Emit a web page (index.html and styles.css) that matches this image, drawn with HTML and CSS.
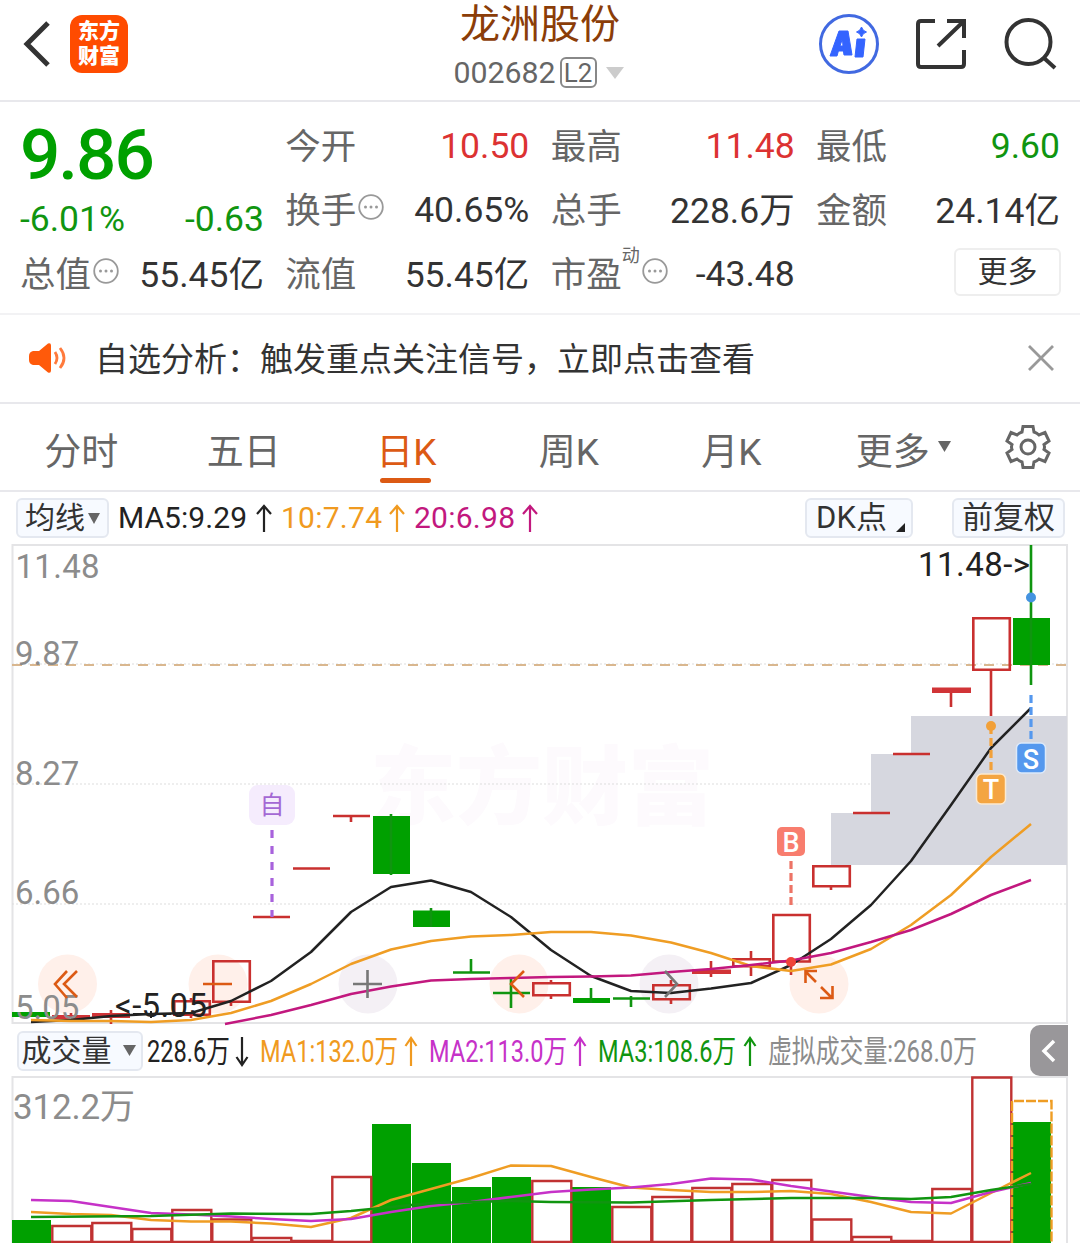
FILE: index.html
```html
<!DOCTYPE html>
<html lang="zh-CN">
<head>
<meta charset="utf-8">
<title>龙洲股份 002682</title>
<link rel="stylesheet" href="styles.css">
</head>
<body>
<header class="topbar">
  <div class="topbar-left">
    <svg class="back" width="30" height="50" viewBox="0 0 30 50"><path d="M27 4 6 25 27 46" fill="none" stroke="#333" stroke-width="5"/></svg>
    <div class="logo"><span>东方</span><span>财富</span></div>
  </div>
  <div class="stock">
    <h1>龙洲股份</h1>
    <div class="code"><span>002682</span><span class="level">L2</span><svg width="18" height="12"><path d="M0 0h18L9 12z" fill="#ccc"/></svg></div>
  </div>
  <div class="actions">
    <svg width="62" height="62" viewBox="0 0 62 62"><circle cx="31" cy="31" r="28.5" fill="#fff" stroke="#4169e1" stroke-width="3"/><path d="M12 43 21 18h9l4 24h-8l-.6-4h-5l-1.4 5zM22 33h3l-.6-7zM39 26h8l-2 18h-8zM43.500 14q1.200 4 5 5-4 1.200-5 5-1.200-4-5-5 4-1.200 5-5z" fill="#3464ff" stroke="#3464ff" stroke-width="1" fill-rule="evenodd" stroke-linejoin="round"/></svg>
    <svg width="54" height="54" viewBox="0 0 54 54"><path d="M21 4H7Q4 4 4 7v40q0 3 3 3h40q3 0 3-3V33M33 4h17v17M50 4 24 29" fill="none" stroke="#333" stroke-width="4"/></svg>
    <svg width="54" height="54" viewBox="0 0 54 54"><circle cx="25.500" cy="25" r="22" fill="none" stroke="#333" stroke-width="4"/><path d="m41 41 11 10" stroke="#333" stroke-width="4"/></svg>
  </div>
</header>

<section class="quote">
  <div class="price-col">
    <div class="price">9.86</div>
    <div class="row change"><span>-6.01%</span><span>-0.63</span></div>
    <div class="row"><span class="label">总值<svg class="tip" width="26" height="26"><use href="#tip"/></svg></span><span class="cn">55.45亿</span></div>
  </div>
  <div class="col">
    <div class="row"><span class="label">今开</span><span class="up">10.50</span></div>
    <div class="row"><span class="label">换手<svg class="tip" width="26" height="26"><use href="#tip"/></svg></span><span>40.65%</span></div>
    <div class="row"><span class="label">流值</span><span class="cn">55.45亿</span></div>
  </div>
  <div class="col">
    <div class="row"><span class="label">最高</span><span class="up">11.48</span></div>
    <div class="row"><span class="label">总手</span><span class="cn">228.6万</span></div>
    <div class="row"><span class="label">市盈<span class="dyn">动</span><svg class="tip" width="26" height="26"><use href="#tip"/></svg></span><span>-43.48</span></div>
  </div>
  <div class="col">
    <div class="row"><span class="label">最低</span><span class="down">9.60</span></div>
    <div class="row"><span class="label">金额</span><span class="cn">24.14亿</span></div>
    <div class="row end"><button class="more">更多</button></div>
  </div>
</section>

<svg width="0" height="0" class="defs"><symbol id="tip" viewBox="0 0 26 26"><circle cx="13" cy="13" r="11.800" fill="none" stroke="#999" stroke-width="1.800"/><g fill="#999"><circle cx="7.500" cy="13" r="1.500"/><circle cx="13" cy="13" r="1.500"/><circle cx="18.500" cy="13" r="1.500"/></g></symbol></svg>

<section class="notice">
  <svg width="38" height="30" viewBox="0 0 38 30"><path d="M4 8h6L19 .5q3-1 3 2v25q0 3-3 2L10 22H4q-4-1-4-5v-4q0-4 4-5z" fill="#ff5a0a"/><path d="M26 9q4 6 0 12M31 5q8 10 0 20" fill="none" stroke="#ff7a3c" stroke-width="2.800"/></svg>
  <span class="notice-text">自选分析：触发重点关注信号，立即点击查看</span>
  <svg width="26" height="26" viewBox="0 0 26 26"><path d="m1 1 24 24M25 1 1 25" stroke="#999" stroke-width="2.800"/></svg>
</section>

<nav class="tabs">
  <span>分时</span><span>五日</span><span class="active">日K</span><span>周K</span><span>月K</span>
  <span class="drop">更多<svg width="13" height="11"><path d="M0 0h13L6.500 11z" fill="#666"/></svg></span>
  <svg class="gear" width="46" height="46" viewBox="-23 -23 46 46"><path d="M-5-20.500H5L6-15Q9-14 11-12L17-14.500 21-6 16-2.500Q17 0 16 2.500L21 6 17 14.500 11 12Q9 14 6 15L5 20.500H-5L-6 15Q-9 14-11 12L-17 14.500-21 6-16 2.500Q-17 0-16-2.500L-21-6-17-14.500-11-12Q-9-14-6-15Z" fill="none" stroke="#666" stroke-width="3"/><circle r="7" fill="none" stroke="#666" stroke-width="3"/></svg>
</nav>

<div class="legend ma">
  <button class="chip">均线<svg width="12" height="11"><path d="M0 0h12L6 11z" fill="#666"/></svg></button>
  <svg class="series" width="440" height="50" viewBox="110 494 440 50">
    <g font-size="30">
      <text x="118" y="529" fill="#222" textLength="129">MA5:9.29</text>
      <text x="281" y="529" fill="#f09a20" textLength="101">10:7.74</text>
      <text x="414" y="529" fill="#c2187e" textLength="101">20:6.98</text>
    </g>
    <g fill="none" stroke-width="2.200">
      <path d="M264 533V507M257 515l7-8 7 8" stroke="#222"/>
      <path d="M397 533V507M390 515l7-8 7 8" stroke="#f09a20"/>
      <path d="M530 533V507M523 515l7-8 7 8" stroke="#c2187e"/>
    </g>
  </svg>
  <button class="chip dk">DK点<svg width="9" height="9"><path d="M9 0v9H0z" fill="#222"/></svg></button>
  <button class="chip fq">前复权</button>
</div>

<svg class="chart" width="1080" height="481" viewBox="0 544 1080 481">
  <text class="wm" x="370" y="818" textLength="344">东方财富</text>
  <path d="M12.500 1023V545H1067V1023Z" fill="none" stroke="#e4e4e6" stroke-width="2"/>
  <path d="M12 664H1067M12 784H1067M12 904H1067" stroke="#ddd" stroke-dasharray="2 2"/>
  <path d="M831 865V813h40v-59h40v-38h156v149z" fill="#d6d7df"/>
  <path d="M12 665H1067" stroke="#d9b78f" stroke-width="2" stroke-dasharray="10 8"/>
  <g fill="#fff0ea"><circle cx="67.500" cy="984" r="29.500"/><circle cx="218" cy="984" r="29.500"/><circle cx="519" cy="984" r="29.500"/><circle cx="819" cy="984" r="29.500"/></g>
  <g fill="#f4f0f5"><circle cx="368" cy="984" r="29.500"/><circle cx="669" cy="984" r="29.500"/></g>
  <g fill="none" stroke="#c9302f" stroke-width="2.600">
    <path d="M174.300 1001.300h35.500v13.400h-35.500zM213.300 961.300h36.500v40.500h-36.500zM533.300 983.300h36.500v12h-36.500zM653.300 985.300h36.500v14h-36.500zM733.300 959.300h36.500v7h-36.500zM773.300 915h36.500v46.500h-36.500zM813.300 866.300h36.500v20h-36.500zM973.300 618.300h36.500v51.500h-36.500z"/>
    <path d="M253 917h37M293 868.500h37M333 816h37M853 813h37M893 754h37M351 816v6M71 1013v6M111 1010v14M191 998v4M191 1015v3M231 1002v4M551 980v3M551 995v4M671 980v5M671 999v5M711 961v16M751 951v8M751 966v10M791 961v14M831 887v3M951 692v15M991 670v46"/>
  </g>
  <path d="M52 1015h38v4H52zM92 1013h38v5H92zM692 969.500h39v4.500H692zM932 687.500h39v5.500H932z" fill="#d13437"/>
  <path d="M133 1014h38M151 1011v7" stroke="#222" stroke-width="2"/>
  <g fill="#00a000"><path d="M12 1012h38v5H12zM373 816h37v58h-37zM413 910.500h37v16.500h-37zM573 998h37v5h-37zM1013 618h37v47h-37z"/></g>
  <path d="M391 814v61M431 908v19M453 972.500h37M471 959v13M493 993h37M511 978v30M591 988v15M613 998.500h37M631 996v11M1031 545v140" stroke="#109510" stroke-width="2.600"/>
  <g class="axis"><text x="15.500" y="578" textLength="84">11.48</text><text x="15" y="665">9.87</text><text x="15" y="785">8.27</text><text x="15" y="904">6.66</text><text x="15" y="1019">5.05</text></g>
  <g fill="none" stroke-width="2.500" stroke-linejoin="round">
    <path stroke="#222" d="M31 1022 71 1020 111 1016 151 1014 191 1013 231 1001 271 981 311 952 351 912 391 887 431 880.500 471 892 511 917 551 950 591 976 631 991 671 993 711 988.500 751 983 791 965 831 939 871 905 911 861 951 805 991 748 1031 708"/>
    <path stroke="#ef9d24" d="M31 1020 71 1021 111 1021 151 1022 191 1020 231 1013 271 1001 311 984 351 964 391 949.500 431 941 471 936.500 511 935 551 932 591 932 631 935.500 671 942.500 711 953 751 966 791 971 831 964.500 871 949 911 925 951 895 991 857 1031 824"/>
    <path stroke="#c2187e" d="M225 1024 271 1015 311 1005 351 994 391 986.500 431 980.500 471 979 511 978 551 977 591 976.500 631 975.500 671 972 711 969 751 965 791 960.500 831 953 871 942 911 930 951 914 991 895 1031 880"/>
  </g>
  <text class="mark" x="918" y="576" textLength="112">11.48-&gt;</text><text class="mark" x="115" y="1017" textLength="92">&lt;-5.05</text>
  <g fill="none" stroke-width="2.600">
    <path stroke="#dc5a14" d="M67 971 55 984l12 14M77 971 64 984l13 13M203 984h29M524 971 511 984l13 13M817 971H805.500V983M806 972l10 10M820 998h12.500V986M821 987l11 11"/>
    <path stroke="#777" d="M353 984h29M367.500 970v28M665 971l12 13-12 13"/>
  </g>
  <g fill="none" stroke-width="3.200">
    <path d="M272 830v87" stroke="#a862dc" stroke-dasharray="8 8"/>
    <path d="M791 861v44" stroke="#ed7466" stroke-dasharray="8 4"/>
    <path d="M991 726v44" stroke="#f2a038" stroke-dasharray="8 4"/>
    <path d="M1031 695v44" stroke="#5598ee" stroke-dasharray="8 4"/>
  </g>
  <circle cx="791" cy="962" r="5" fill="#f04438"/><circle cx="991" cy="726" r="5" fill="#f2a038"/><circle cx="1031" cy="597.500" r="5" fill="#4493e0"/>
  <rect x="249" y="785" width="46" height="40" rx="9" fill="#f5ecfd"/><text class="self" x="272" y="814">自</text>
  <rect x="777" y="827" width="28" height="29" rx="5" fill="#f87d6e"/>
  <rect x="976.500" y="774" width="29" height="30" rx="5" fill="#f4a542" stroke="#fce9cf" stroke-width="1.500"/>
  <rect x="1016.500" y="743" width="29" height="30" rx="5" fill="#5598ee" stroke="#dce9fa" stroke-width="1.500"/>
  <g class="pin"><text x="791" y="851.500">B</text><text x="991" y="799">T</text><text x="1031" y="768.500">S</text></g>
</svg>

<div class="legend vol">
  <button class="chip"><span>成交量</span><svg width="13" height="11"><path d="M0 0h13L6.500 11z" fill="#666"/></svg></button>
  <svg class="series" width="840" height="51" viewBox="143 1025 840 51">
    <g font-size="31">
      <text x="147" y="1061.500" fill="#222" textLength="83" lengthAdjust="spacingAndGlyphs">228.6万</text>
      <text x="260" y="1061.500" fill="#f09a20" textLength="138" lengthAdjust="spacingAndGlyphs">MA1:132.0万</text>
      <text x="429" y="1061.500" fill="#c632c8" textLength="138" lengthAdjust="spacingAndGlyphs">MA2:113.0万</text>
      <text x="598" y="1061.500" fill="#109510" textLength="138" lengthAdjust="spacingAndGlyphs">MA3:108.6万</text>
      <text x="768" y="1061.500" fill="#8c8c8c" textLength="209" lengthAdjust="spacingAndGlyphs">虚拟成交量:268.0万</text>
    </g>
    <g fill="none" stroke-width="2.200">
      <path d="M242 1037v28M236.500 1057l5.500 8 5.500-8" stroke="#222"/>
      <path d="M411 1066v-28M405.500 1046l5.500-8 5.500 8" stroke="#f09a20"/>
      <path d="M580 1066v-28M574.500 1046l5.500-8 5.500 8" stroke="#c632c8"/>
      <path d="M750 1066v-28M744.500 1046l5.500-8 5.500 8" stroke="#109510"/>
    </g>
  </svg>
  <button class="toggle"><svg width="14" height="24" viewBox="0 0 14 24"><path d="M12 2 2 12l10 10" fill="none" stroke="#fff" stroke-width="3.500"/></svg></button>
</div>

<svg class="chart" width="1080" height="167" viewBox="0 1076 1080 167">
  <path d="M12.500 1243V1077H1067V1243" fill="none" stroke="#e4e4e6" stroke-width="2"/>
  <text class="axis big" x="13" y="1118.500" textLength="122">312.2万</text>
  <path d="M12 1220h39v23H12zM372 1124h39v119h-39zM412 1163h39v80h-39zM452 1187h39v56h-39zM492 1177h39v66h-39zM572 1187h39v56h-39zM1012 1122h39v121h-39z" fill="#00a000"/>
  <path d="M52.300 1226h39v16h-39zM92.300 1223h39v19h-39zM132.300 1229h39v13h-39zM172.300 1210h39v32h-39zM212.300 1219.500h39v22.500h-39zM252.300 1238h39v4h-39zM292.300 1241h39v1h-39zM332.300 1177h39v65h-39zM532.300 1181h39v61h-39zM612.300 1207h39v35h-39zM652.300 1197h39v45h-39zM692.300 1188h39v54h-39zM732.300 1184h39v58h-39zM772.300 1180h39v62h-39zM812.300 1219.500h39v22.500h-39zM852.300 1237h39v5h-39zM892.300 1241h39v1h-39zM932.300 1189h39v53h-39zM972.300 1077.500h39v164.500h-39z" fill="none" stroke="#c03232" stroke-width="2.400"/>
  <path d="M1012 1243V1101h39.500V1243" fill="none" stroke="#ef9d24" stroke-width="2.400" stroke-dasharray="10 2"/>
  <g fill="none" stroke-width="2.500" stroke-linejoin="round">
    <path stroke="#ef9d24" d="M31 1212 71 1214 111 1215 151 1220 191 1221.500 231 1221.500 271 1223.500 311 1227 351 1218 391 1200 431 1189 471 1178 511 1165.500 551 1166 591 1177 631 1187.500 671 1190 711 1192 751 1192 791 1191 831 1194 871 1202 911 1212 951 1213.500 991 1193 1031 1173"/>
    <path stroke="#c632c8" d="M31 1200 71 1201 111 1207 151 1213 191 1214.500 231 1216.500 271 1219 311 1221 351 1219 391 1212 431 1206 471 1202 511 1197 551 1192 591 1189.500 631 1187.500 671 1184 711 1178.500 751 1179.500 791 1186 831 1191.500 871 1197 911 1202 951 1203 991 1192 1031 1183"/>
    <path stroke="#109510" d="M31 1217 151 1216 231 1213.500 311 1214 351 1211 391 1207 431 1203 511 1201 551 1202 631 1202.500 711 1200 791 1198 871 1198 911 1199 951 1197 991 1190 1031 1184"/>
  </g>
</svg>
</body>
</html>
```
FILE: styles.css
```css
* { box-sizing: border-box; }
body { margin: 0; width: 1080px; height: 1243px; overflow: hidden; background: #fff; color: #333; font-family: Roboto, "Noto Sans CJK SC", sans-serif; }
svg { display: block; flex: none; overflow: visible; }
button { font-family: inherit; color: #333; padding: 0; margin: 0; }
.defs { display: none; }

.topbar { display: grid; grid-template-columns: 1fr 1fr 1fr; height: 102px; border-bottom: 2px solid #e8e8ec; }
.topbar-left { display: flex; align-items: center; height: 88px; padding-left: 21px; gap: 19px; }
.logo { display: flex; flex-direction: column; align-items: center; justify-content: center; width: 58px; height: 58px; border-radius: 12px; background: #ff4b00; color: #fff; font-size: 21px; font-weight: 900; line-height: 25px; }
.stock { display: flex; flex-direction: column; align-items: center; padding-top: 2px; }
h1 { margin: 0; font-size: 40px; line-height: 46px; font-weight: 400; color: #8b3d08; }
.code { display: flex; align-items: center; height: 49px; padding-right: 3px; font-size: 30.300px; color: #666; }
.level { display: flex; align-items: center; justify-content: center; width: 37px; height: 31px; margin: 0 9px 0 4px; border: 2px solid #888; border-radius: 6px; font-size: 26px; }
.actions { display: flex; justify-content: flex-end; align-items: center; height: 88px; padding-right: 23px; gap: 35px; }
.actions svg:first-child { margin-right: -1px; }

.quote { display: grid; grid-template-columns: repeat(4, 244px); justify-content: space-between; height: 213px; padding: 12px 20px 0; border-bottom: 2px solid #f2f2f4; font-size: 35.500px; }
.row { display: flex; justify-content: space-between; align-items: center; height: 64px; white-space: nowrap; }
.label { display: flex; align-items: center; padding-bottom: 6px; font-size: 35.500px; color: #666; }
.cn { padding-bottom: 6px; }
.tip { margin: 0 0 0 2px; }
.dyn { align-self: flex-start; font-size: 18px; line-height: 20px; }
.up { color: #dc3232; }
.down, .change, .price { color: #109510; }
.price { height: 82px; line-height: 82px; font-size: 71px; font-weight: 500; letter-spacing: -2px; color: #00a000; }
.change { height: 46px; }
.end { justify-content: flex-end; }
.more { width: 107px; height: 48px; margin: 0 -1px 4px 0; border: 2px solid #eee; border-radius: 6px; background: #fff; font-size: 30px; line-height: 40px; }

.notice { display: flex; align-items: center; height: 89px; padding: 0 26px 2px 29px; border-bottom: 2px solid #e8e8ec; }
.notice-text { flex: 1; margin-left: 28px; padding-bottom: 2px; font-size: 33px; }

.tabs { display: grid; grid-template-columns: repeat(6, 162.5px) 105px; align-items: center; height: 88px; border-bottom: 2px solid #e8e8ec; font-size: 37px; color: #666; text-align: center; }
.tabs span { padding-top: 3px; }
.active { position: relative; color: #dc5a14; }
.active::after { content: ""; position: absolute; left: 55px; bottom: -7px; width: 51px; height: 5px; border-radius: 3px; background: #dc5a14; }
.drop { display: flex; align-items: center; justify-content: center; gap: 8px; padding-left: 19px; }
.drop svg { margin-bottom: 5px; }
.gear { margin-left: 30px; }

.legend { display: flex; align-items: center; }
.chip { display: flex; align-items: center; justify-content: center; height: 40px; border: 2px solid #e4e8f0; border-radius: 6px; background: #f7faff; font-size: 30px; line-height: 36px; white-space: nowrap; }
.ma { height: 52px; padding-left: 16px; }
.ma .chip { width: 93px; gap: 3px; }
.ma .series { margin-left: 1px; }
.ma .dk { width: 108px; margin-left: 255px; padding-left: 3px; gap: 9px; font-size: 31px; }
.dk svg { margin-top: 18px; }
.ma .fq { width: 113px; margin-left: 39px; font-size: 31px; }
.vol { height: 51px; padding-left: 17px; }
.vol .chip { width: 126px; padding-right: 3px; gap: 11px; }
.toggle { display: flex; align-items: center; justify-content: center; width: 38px; height: 51px; margin-left: 47px; border: 0; border-radius: 10px 0 0 10px; background: #99979a; }

.axis { font-size: 33px; fill: #8c8c8c; }
.big { font-size: 35px; }
.mark { font-size: 33px; fill: #222; }
.wm { font-size: 86px; font-weight: 900; fill: #fdfafd; }
.self { font-size: 25px; fill: #a468d4; text-anchor: middle; }
.pin { font-size: 27px; font-weight: 500; fill: #fff; text-anchor: middle; }
```
